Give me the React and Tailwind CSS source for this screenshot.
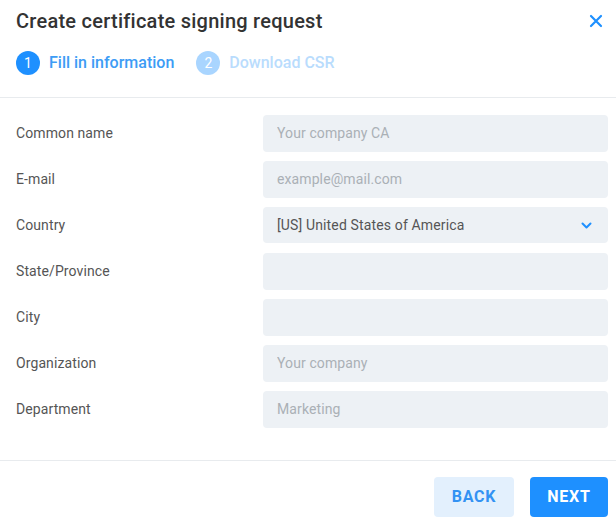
import React from "react";

const fields = [
  { label: "Common name", placeholder: "Your company CA" },
  { label: "E-mail", placeholder: "example@mail.com" },
  { label: "Country", select: "[US] United States of America" },
  { label: "State/Province", placeholder: "" },
  { label: "City", placeholder: "" },
  { label: "Organization", placeholder: "Your company" },
  { label: "Department", placeholder: "Marketing" },
];

const App = () => {
  return (
    <div className="w-[616px] h-[524px] bg-white font-['Roboto',sans-serif] flex flex-col">
      {/* Header */}
      <div className="pl-4 pr-2 pt-[8px] pb-[22px] border-b border-[#e8ebee]">
        <div className="flex items-center justify-between">
          <h1 className="text-[20px] leading-[26px] font-medium text-[#333] tracking-[0.25px]">
            Create certificate signing request
          </h1>
          <button className="text-[#1e90ff] mr-[5px]">
            <svg width="14" height="14" viewBox="0 0 14 14" fill="none" stroke="currentColor" strokeWidth="2.2" strokeLinecap="round">
              <path d="M2 2l10 10M12 2L2 12" />
            </svg>
          </button>
        </div>
        <div className="flex items-center gap-[22px] mt-[17px]">
          <div className="flex items-center gap-[9px]">
            <span className="w-6 h-6 rounded-full bg-[#1e90ff] text-white text-[14px] flex items-center justify-center">1</span>
            <span className="text-[16px] font-medium text-[#3d9cf5]">Fill in information</span>
          </div>
          <div className="flex items-center gap-[9px]">
            <span className="w-6 h-6 rounded-full bg-[#a9d5ff] text-white text-[14px] flex items-center justify-center">2</span>
            <span className="text-[16px] font-medium text-[#b9dcfd]">Download CSR</span>
          </div>
        </div>
      </div>

      {/* Form */}
      <div className="pl-4 pr-2 pt-4 pb-[32px] flex flex-col gap-2 border-b border-[#e8ebee]">
        {fields.map((f) => (
          <div key={f.label} className="flex items-center h-[38px]">
            <label className="w-[247px] text-[14px] text-[#555] tracking-[0.1px]">{f.label}</label>
            {f.select ? (
              <div className="flex-1 h-[36px] rounded bg-[#edf1f5] flex items-center justify-between pl-[14px] pr-[16px]">
                <span className="text-[14px] text-[#555] tracking-[0.15px]">{f.select}</span>
                <svg width="11" height="7" viewBox="0 0 11 7" fill="none" stroke="#1e90ff" strokeWidth="2" strokeLinecap="round" strokeLinejoin="round">
                  <path d="M1.5 1.5l4 4 4-4" />
                </svg>
              </div>
            ) : (
              <input
                placeholder={f.placeholder}
                className="flex-1 h-[37px] rounded bg-[#edf1f5] px-[14px] text-[14px] tracking-[0.1px] text-[#555] placeholder:text-[#aab0b5] outline-none"
              />
            )}
          </div>
        ))}
      </div>

      {/* Footer */}
      <div className="flex justify-end gap-4 px-2 pt-4">
        <button className="w-20 h-10 rounded bg-[#e3f0fd] text-[#3392f3] text-[16px] font-bold tracking-[0.8px]">
          BACK
        </button>
        <button className="w-[78px] h-10 rounded bg-[#1e90ff] text-white text-[16px] font-bold tracking-[0.8px]">
          NEXT
        </button>
      </div>
    </div>
  );
};

export default App;
